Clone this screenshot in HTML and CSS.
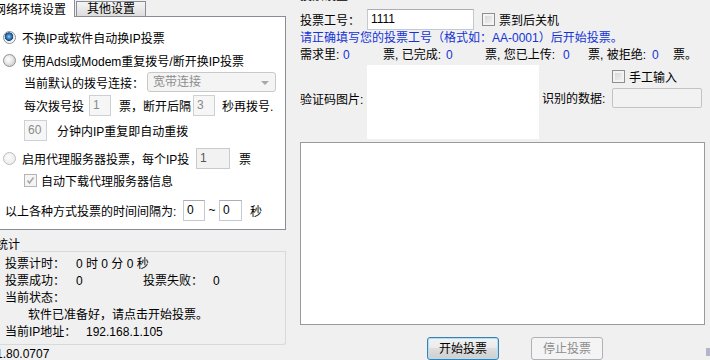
FILE: index.html
```html
<!DOCTYPE html>
<html lang="zh-CN">
    <head>
        <meta charset="UTF-8" />
        <title>投票</title>
        <link rel="stylesheet" href="styles.css">
    </head>
    <body>
        <div class="app">
            <div class="left">
                <div class="tabs">
                    <div class="tab tab-active">网络环境设置</div>
                    <div class="tab">其他设置</div>
                </div>
                <div class="page">
                    <div class="row">
                        <span class="radio radio-on"></span>不换IP或软件自动换IP投票
                    </div>
                    <div class="row">
                        <span class="radio"></span>使用Adsl或Modem重复拨号/断开换IP投票
                    </div>
                    <div class="row row-in mt2">
                        <span class="lbl w123">当前默认的拨号连接：</span>
                        <div class="combo">宽带连接<span class="arrow"></span></div>
                    </div>
                    <div class="row row-in">
                        <span class="lbl w65">每次拨号投</span>
                        <span class="tb tb-off w22">1</span>
                        <span class="lbl w74 ml8">票，断开后隔</span>
                        <span class="tb tb-off w22">3</span>
                        <span class="lbl ml7">秒再拨号.</span>
                    </div>
                    <div class="row row-in mt5">
                        <span class="tb tb-off w23">60</span>
                        <span class="lbl ml10">分钟内IP重复即自动重拨</span>
                    </div>
                    <div class="row mt8">
                        <span class="radio radio-off"></span>
                        <span class="lbl w174">启用代理服务器投票，每个IP投</span>
                        <span class="tb tb-grey w34">1</span>
                        <span class="lbl ml9">票</span>
                    </div>
                    <div class="row row-in mt2">
                        <span class="check check-off">
                            <svg width="11" height="11" viewBox="0 0 11 11"><path d="M2.5 5.5 L4.5 8 L8.5 2.5" fill="none" stroke="#a8a8a8" stroke-width="1.6"/></svg>
                        </span>
                        <span class="lbl ml4">自动下载代理服务器信息</span>
                    </div>
                    <div class="row row-gap mt10">
                        <span class="lbl w178">以上各种方式投票的时间间隔为:</span>
                        <span class="tb w22">0</span>
                        <span class="lbl w14 tc">~</span>
                        <span class="tb w23">0</span>
                        <span class="lbl ml8">秒</span>
                    </div>
                </div>
                <div class="stats-head">
                    <span>统计</span>
                    <span class="stats-line"></span>
                </div>
                <div class="stats">
                    <div class="srow"><span class="k">投票计时：</span>0 时 0 分 0 秒</div>
                    <div class="srow">
                        <span class="k">投票成功：</span><span class="v">0</span>
                        <span class="k k-fail">投票失败：</span>0
                    </div>
                    <div class="srow">当前状态：</div>
                    <div class="srow srow-in">软件已准备好，请点击开始投票。</div>
                    <div class="srow"><span class="k k-ip">当前IP地址：</span>192.168.1.105</div>
                </div>
                <div class="version">1.80.0707</div>
            </div>

            <div class="right">
                <div class="r-title">投票设置</div>
                <div class="r-id">
                    <span class="lbl w67">投票工号：</span>
                    <span class="tb w107">1111</span>
                    <span class="check ml8"></span>
                    <span class="lbl ml4">票到后关机</span>
                </div>
                <div class="r-tip">请正确填写您的投票工号（格式如：AA-0001）后开始投票。</div>
                <div class="r-count">
                    <span class="w43">需求里:</span><span class="num w40">0</span>
                    <span class="w63">票, 已完成:</span><span class="num w39">0</span>
                    <span class="w78">票, 您已上传:</span><span class="num w25">0</span>
                    <span class="w64">票, 被拒绝:</span><span class="num w21">0</span>
                    <span>票。</span>
                </div>
                <div class="r-code">
                    <span class="code-lbl">验证码图片:</span>
                    <div class="captcha"></div>
                    <div class="code-side">
                        <div class="manual">
                            <span class="check"></span>
                            <span class="lbl ml4">手工输入</span>
                        </div>
                        <div class="result">
                            <span class="lbl w70">识别的数据:</span>
                            <span class="tb tb-dis w90"></span>
                        </div>
                    </div>
                </div>
                <div class="memo"></div>
                <div class="buttons">
                    <button class="btn btn-main">开始投票</button>
                    <button class="btn btn-off" disabled>停止投票</button>
                    <span class="grip"></span>
                </div>
            </div>
        </div>
    </body>
</html>
```

FILE: styles.css
```css
* {
    box-sizing: border-box;
}
body {
    margin: 0;
    width: 710px;
    height: 360px;
    overflow: hidden;
    background: #f0f0f0;
    font-family: "Liberation Sans", "Noto Sans CJK SC", sans-serif;
    font-size: 12px;
    color: #000;
}
.app {
    display: flex;
    height: 360px;
}

/* left side: tab control */
.left {
    width: 286px;
    flex: none;
}
.tabs {
    display: flex;
    align-items: flex-end;
    height: 16px;
    margin-left: -8px;
}
.tab {
    width: 70px;
    height: 15px;
    margin-left: 1px;
    line-height: 14px;
    text-align: center;
    white-space: nowrap;
    border: 1px solid #898c95;
    border-bottom: none;
    background: linear-gradient(#f4f4f4, #e9e9e9 50%, #dcdcdc);
}
.tab-active {
    width: 83px;
    height: 18px;
    margin: 0 0 -1px 0;
    padding: 2px 0 0 1px;
    line-height: 16px;
    text-align: left;
    background: #fff;
    position: relative;
    z-index: 1;
}
.page {
    height: 214px;
    background: #fff;
    border: 1px solid #898c95;
    border-left: none;
    padding-top: 10px;
}
.row {
    display: flex;
    align-items: center;
    height: 20px;
    margin-top: 3px;
    white-space: nowrap;
}
.row:first-child {
    margin-top: 0;
}
.row-in {
    padding-left: 24px;
}
.row-gap {
    padding-left: 5px;
}
.mt2 { margin-top: 2px; }
.mt5 { margin-top: 5px; }
.mt8 { margin-top: 8px; }
.mt10 { margin-top: 10px; }
.ml4 { margin-left: 4px; }
.ml7 { margin-left: 7px; }
.ml8 { margin-left: 8px; }
.ml9 { margin-left: 9px; }
.ml10 { margin-left: 10px; }
.lbl {
    display: inline-block;
    flex: none;
}
.tc { text-align: center; }
.w14 { width: 14px; }
.w21 { width: 21px; }
.w22 { width: 22px; }
.w23 { width: 23px; }
.w25 { width: 25px; }
.w34 { width: 34px; }
.w39 { width: 39px; }
.w40 { width: 40px; }
.w43 { width: 43px; }
.w63 { width: 63px; }
.w64 { width: 64px; }
.w65 { width: 65px; }
.w67 { width: 67px; }
.w70 { width: 70px; }
.w74 { width: 74px; }
.w78 { width: 78px; }
.w90 { width: 90px; }
.w107 { width: 107px; }
.w123 { width: 123px; }
.w174 { width: 174px; }
.w178 { width: 178px; }

.radio {
    width: 13px;
    height: 13px;
    flex: none;
    margin: 0 6px 0 3px;
    border: 1px solid #8e8f8f;
    border-radius: 50%;
    background: radial-gradient(circle at 40% 40%, #fff 0, #e8e8e8 4px, #d6d6d6 6px);
}
.radio-on {
    background: radial-gradient(circle at 45% 42%, #9fd3f5 0, #3c86c9 2px, #17497f 4px, #dfe3e8 4.5px, #fff 6px);
}
.radio-off {
    border-color: #bcbcbc;
    background: radial-gradient(circle at 40% 40%, #fbfbfb 0, #eeeeee 6px);
}
.check {
    display: inline-flex;
    align-items: center;
    justify-content: center;
    width: 13px;
    height: 13px;
    flex: none;
    border: 1px solid #8e8f8f;
    background: linear-gradient(135deg, #d2d2d2, #f7f7f7);
    box-shadow: inset 0 0 0 2px #f3f3f3;
}
.check-off {
    border-color: #b5b5b5;
    background: #f4f4f4;
    box-shadow: none;
}
.tb {
    display: inline-block;
    flex: none;
    height: 21px;
    padding-left: 3px;
    line-height: 18px;
    background: #fff;
    border: 1px solid #c5cad0;
    border-top-color: #abadb3;
}
.tb-off {
    background: #f6f6f6;
    color: #8a8a8a;
    border-color: #cdd0d4;
}
.tb-grey {
    background: #f2f2f2;
    color: #555;
    border-color: #c7cbd0;
}
.tb-dis {
    height: 20px;
    background: #f2f2f2;
    border-color: #c3c3c3;
    border-radius: 2px;
}
.combo {
    position: relative;
    width: 129px;
    height: 20px;
    padding-left: 5px;
    line-height: 18px;
    color: #8d8d8d;
    background: #f4f4f4;
    border: 1px solid #c9c9c9;
    border-radius: 3px;
}
.arrow {
    position: absolute;
    right: 6px;
    top: 8px;
    border-left: 4px solid transparent;
    border-right: 4px solid transparent;
    border-top: 4px solid #a8a8a8;
}

/* statistics group */
.stats-head {
    display: flex;
    align-items: flex-end;
    height: 14px;
    margin: 8px 0 0 -4px;
    line-height: 14px;
}
.stats-line {
    flex: 1;
    height: 1px;
    margin-left: 2px;
    border-top: 1px solid #d7dadd;
    border-right: 1px solid #d7dadd;
}
.stats {
    height: 93px;
    padding: 4px 0 0 5px;
    border-right: 1px solid #d7dadd;
    border-bottom: 1px solid #d7dadd;
    border-bottom-right-radius: 3px;
}
.srow {
    display: flex;
    height: 17px;
    line-height: 17px;
    white-space: nowrap;
}
.srow-in {
    padding-left: 23px;
}
.k {
    display: inline-block;
    width: 71px;
}
.k-fail {
    width: 70px;
}
.k-ip {
    width: 81px;
}
.v {
    display: inline-block;
    width: 67px;
}
.version {
    margin: 2px 0 0 -4px;
    line-height: 14px;
}

/* right side */
.right {
    flex: 1;
    display: flex;
    flex-direction: column;
    padding-left: 14px;
    white-space: nowrap;
}
.r-title {
    height: 12px;
    margin-top: -9px;
    line-height: 10px;
}
.r-id {
    display: flex;
    align-items: center;
    height: 21px;
    margin-top: 6px;
}
.r-tip {
    height: 17px;
    line-height: 17px;
    color: #1433d6;
}
.r-count {
    display: flex;
    height: 16px;
    line-height: 16px;
}
.r-count span {
    display: inline-block;
    flex: none;
}
.num {
    color: #1433d6;
}
.r-code {
    display: flex;
    height: 75px;
    margin-top: 2px;
}
.code-lbl {
    width: 67px;
    margin-top: 28px;
    line-height: 14px;
}
.captcha {
    width: 172px;
    background: #fff;
}
.code-side {
    display: flex;
    flex-direction: column;
    padding-left: 3px;
}
.manual {
    display: flex;
    align-items: center;
    height: 16px;
    margin-top: 4px;
    padding-left: 70px;
}
.result {
    display: flex;
    align-items: center;
    height: 20px;
    margin-top: 3px;
}
.memo {
    width: 405px;
    height: 186px;
    margin-top: 3px;
    background: #fff;
    border: 1px solid #9a9a9a;
}
.buttons {
    display: flex;
    height: 23px;
    margin-top: 12px;
}
.btn {
    width: 72px;
    height: 23px;
    padding: 0;
    font: inherit;
    line-height: 20px;
    border-radius: 3px;
}
.btn-main {
    margin-left: 127px;
    color: #000;
    border: 1px solid #3c7fb1;
    background: linear-gradient(#f2f2f2, #ebebeb 45%, #dddddd 50%, #cfcfcf);
    box-shadow: inset 0 0 0 1px #aee0f8;
}
.btn-off {
    margin-left: 32px;
    color: #8d8d8d;
    border: 1px solid #adb2b5;
    background: #f4f4f4;
}
.grip {
    width: 4px;
    height: 8px;
    margin: 11px 0 0 auto;
    background: #b4b4cc;
}
```
